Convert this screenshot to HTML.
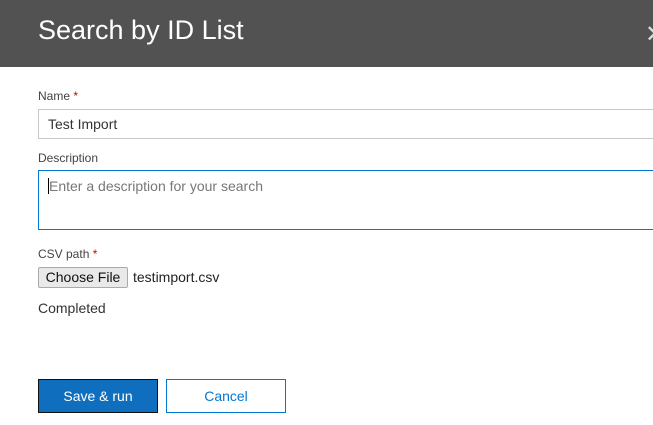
<!DOCTYPE html>
<html><head><style>
body{margin:0;width:653px;height:425px;overflow:hidden;background:#fff;font-family:"Segoe UI","Liberation Sans",sans-serif;position:relative}
.hd{position:absolute;left:0;top:0;width:653px;height:67px;background:#525252}
.t{position:absolute;left:38px;top:15px;color:#fff;font-size:27px;letter-spacing:0}
.x{position:absolute;left:645px;top:20px;color:#ddd;font-size:24px}
.l{position:absolute;left:38px;font-size:12px;color:#444}
.l span{color:#c00}
.in{position:absolute;left:38px;width:640px;box-sizing:border-box;border:1px solid #c8c8c8;font-size:14px;color:#333;padding-left:9px}
</style></head><body>
<div class="hd"><div class="t">Search by ID List</div><div class="x">✕</div></div>
<div class="l" style="top:89px">Name <span>*</span></div>
<div class="in" style="top:109px;height:30px;line-height:28px">Test Import</div>
<div class="l" style="top:151px">Description</div>
<div class="in" style="top:170px;height:60px;border-color:#0078d4;color:#777;padding-top:5px;line-height:20px"><span style="border-left:1px solid #000;padding-left:0">Enter a description for your search</span></div>
<div class="l" style="top:247px">CSV path <span>*</span></div>
<div style="position:absolute;left:38px;top:267px;width:90px;height:21px;box-sizing:border-box;border:1px solid #aaa;background:#e9e9e9;font-size:14px;line-height:19px;text-align:center;color:#111;border-radius:2px">Choose File</div>
<div style="position:absolute;left:133px;top:269px;font-size:14px;color:#222">testimport.csv</div>
<div style="position:absolute;left:38px;top:300px;font-size:14px;color:#333">Completed</div>
<div style="position:absolute;left:38px;top:379px;width:120px;height:34px;box-sizing:border-box;background:#106ebe;border:1px solid #111;color:#fff;font-size:14px;line-height:32px;text-align:center">Save &amp; run</div>
<div style="position:absolute;left:166px;top:379px;width:120px;height:34px;box-sizing:border-box;border:1px solid #0078d4;color:#0078d4;font-size:14px;line-height:32px;text-align:center">Cancel</div>
</body></html>
